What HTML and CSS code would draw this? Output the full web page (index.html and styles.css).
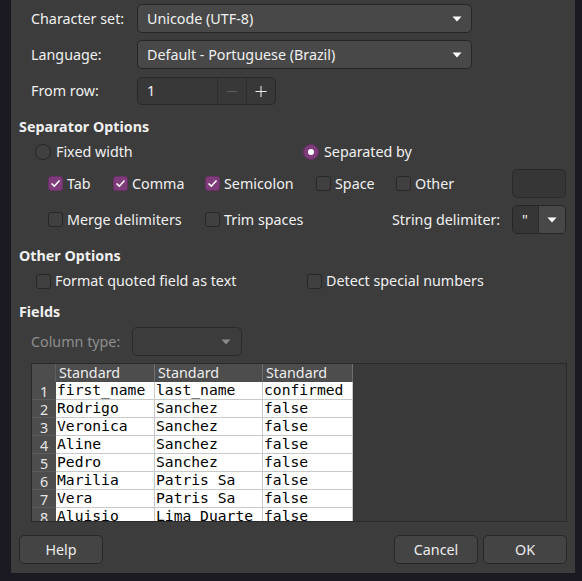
FILE: index.html
```html
<!DOCTYPE html>
<html>
<head>
<meta charset="utf-8">
<link rel="stylesheet" href="styles.css">
</head>
<body>
<div class="desk">
  <div class="dialog">
    <div class="form">
      <span class="lbl">Character set:</span>
      <div class="combo wide"><span>Unicode (UTF-8)</span><svg class="arrow" width="10" height="6" viewBox="0 0 10 6"><path d="M0.5 0.5 L9.5 0.5 L5 5.5 Z"/></svg></div>
      <span class="lbl">Language:</span>
      <div class="combo wide"><span>Default - Portuguese (Brazil)</span><svg class="arrow" width="10" height="6" viewBox="0 0 10 6"><path d="M0.5 0.5 L9.5 0.5 L5 5.5 Z"/></svg></div>
      <span class="lbl">From row:</span>
      <div class="spin">
        <span class="spin-val">1</span>
        <span class="spin-btn"><svg width="12" height="12" viewBox="0 0 12 12"><path class="minus" d="M1 6.5 H11"/></svg></span>
        <span class="spin-btn"><svg width="12" height="12" viewBox="0 0 12 12"><path class="plus" d="M0.5 6.5 H11.5 M6 1 V12"/></svg></span>
      </div>
    </div>

    <div class="heading h-sep">Separator Options</div>
    <div class="radio-row">
      <label class="opt"><span class="radio"></span>Fixed width</label>
      <label class="opt"><span class="radio on"></span>Separated by</label>
    </div>
    <div class="row-a">
      <label class="opt"><span class="chk on"><svg width="15" height="15" viewBox="0 0 15 15"><path d="M3.5 7.5 L6.3 10.2 L11.5 4.5"/></svg></span>Tab</label>
      <label class="opt"><span class="chk on"><svg width="15" height="15" viewBox="0 0 15 15"><path d="M3.5 7.5 L6.3 10.2 L11.5 4.5"/></svg></span>Comma</label>
      <label class="opt"><span class="chk on"><svg width="15" height="15" viewBox="0 0 15 15"><path d="M3.5 7.5 L6.3 10.2 L11.5 4.5"/></svg></span>Semicolon</label>
      <label class="opt"><span class="chk"></span>Space</label>
      <label class="opt"><span class="chk"></span>Other</label>
      <div class="entry other-field"></div>
    </div>
    <div class="row-b">
      <label class="opt"><span class="chk"></span>Merge delimiters</label>
      <label class="opt"><span class="chk"></span>Trim spaces</label>
      <span class="lbl">String delimiter:</span>
      <div class="delim">
        <span class="delim-val">"</span>
        <span class="delim-btn"><svg class="arrow" width="10" height="6" viewBox="0 0 10 6"><path d="M0.5 0.5 L9.5 0.5 L5 5.5 Z"/></svg></span>
      </div>
    </div>

    <div class="heading h-other">Other Options</div>
    <div class="other-row">
      <label class="opt"><span class="chk"></span>Format quoted field as text</label>
      <label class="opt"><span class="chk"></span>Detect special numbers</label>
    </div>

    <div class="heading h-fields">Fields</div>
    <div class="coltype-row">
      <span class="lbl dim">Column type:</span>
      <div class="combo disabled"><svg class="arrow" width="10" height="6" viewBox="0 0 10 6"><path d="M0.5 0.5 L9.5 0.5 L5 5.5 Z"/></svg></div>
    </div>

    <div class="preview">
      <div class="grid">
        <div class="hd corner"></div>
        <div class="hd">Standard</div>
        <div class="hd">Standard</div>
        <div class="hd">Standard</div>

        <div class="rn">1</div><div class="cell">first_name</div><div class="cell">last_name</div><div class="cell">confirmed</div>
        <div class="rn">2</div><div class="cell">Rodrigo</div><div class="cell">Sanchez</div><div class="cell">false</div>
        <div class="rn">3</div><div class="cell">Veronica</div><div class="cell">Sanchez</div><div class="cell">false</div>
        <div class="rn">4</div><div class="cell">Aline</div><div class="cell">Sanchez</div><div class="cell">false</div>
        <div class="rn">5</div><div class="cell">Pedro</div><div class="cell">Sanchez</div><div class="cell">false</div>
        <div class="rn">6</div><div class="cell">Marilia</div><div class="cell">Patris Sa</div><div class="cell">false</div>
        <div class="rn">7</div><div class="cell">Vera</div><div class="cell">Patris Sa</div><div class="cell">false</div>
        <div class="rn">8</div><div class="cell">Aluisio</div><div class="cell">Lima Duarte</div><div class="cell">false</div>
      </div>
    </div>

    <div class="buttons">
      <button class="btn">Help</button>
      <div class="btn-group">
        <button class="btn">Cancel</button>
        <button class="btn">OK</button>
      </div>
    </div>
  </div>
</div>
</body>
</html>
```
FILE: styles.css
```css
* { box-sizing: border-box; }
html, body { margin: 0; padding: 0; }
body {
  width: 582px;
  height: 581px;
  overflow: hidden;
  background: #1b1a22;
  font-family: "Noto Sans", sans-serif;
  font-size: 14.3px;
  line-height: 20px;
  color: #f0f0f0;
}
.desk { width: 582px; height: 581px; padding-left: 11px; }
.dialog {
  width: 564px;
  height: 573px;
  background: #3c3c3c;
  overflow: hidden;
}

/* top form */
.form {
  display: grid;
  grid-template-columns: 106px 335px;
  grid-template-rows: 29px 29px 29px;
  row-gap: 7px;
  padding: 4px 0 0 20px;
  align-items: center;
}
.lbl { white-space: nowrap; }
.lbl.dim { color: #8e8e8e; }

.combo {
  height: 29px;
  border: 1px solid #262626;
  border-radius: 5px;
  background: #484848;
  display: flex;
  align-items: center;
  justify-content: space-between;
  padding: 0 9px 0 9px;
  white-space: nowrap;
}
.combo.wide { width: 335px; }
.arrow path { fill: #ffffff; }
.combo.disabled {
  width: 110px;
  background: #3c3c3c;
  border-color: #2a2a2a;
  justify-content: flex-end;
  padding-right: 10px;
}
.combo.disabled .arrow path { fill: #8a8a8a; }

.spin {
  align-self: end;
  width: 139px;
  height: 28px;
  border: 1px solid #292929;
  border-radius: 5px;
  background: #383838;
  display: flex;
  overflow: hidden;
}
.spin-val {
  width: 80px;
  padding-left: 9px;
  display: flex;
  align-items: center;
}
.spin-btn {
  width: 29px;
  border-left: 1px solid #2e2e2e;
  display: flex;
  align-items: center;
  justify-content: center;
}
.spin-btn path { stroke-width: 1; fill: none; }
.spin-btn .minus { stroke: #5e5e5e; }
.spin-btn .plus { stroke: #f2f2f2; }

/* headings */
.heading {
  font-weight: 700;
  height: 20px;
  padding-left: 8px;
  white-space: nowrap;
}
.h-sep { margin-top: 12px; }
.h-other { margin-top: 12px; }
.h-fields { margin-top: 11px; }

/* option items */
.opt {
  display: flex;
  align-items: center;
  white-space: nowrap;
}
.chk {
  width: 15px;
  height: 15px;
  flex: none;
  border: 1px solid #272727;
  border-radius: 3px;
  background: #404040;
  margin-right: 4px;
  display: flex;
}
.chk.on {
  background: #7e3c7a;
  border-color: #6a2f66;
}
.chk svg { margin: -1px; }
.chk path { fill: none; stroke: #ffffff; stroke-width: 1.6; }
.radio {
  width: 16px;
  height: 16px;
  flex: none;
  border: 1px solid #272727;
  border-radius: 50%;
  background: #404040;
  margin-right: 5px;
  display: flex;
  align-items: center;
  justify-content: center;
}
.radio.on {
  background: #7e3c7a;
  border-color: #6a2f66;
}
.radio.on::after {
  content: "";
  width: 6px;
  height: 6px;
  border-radius: 50%;
  background: #ffffff;
}

.radio-row {
  margin-top: 5px;
  height: 20px;
  display: grid;
  grid-template-columns: 268px auto;
  padding-left: 24px;
  align-items: center;
}
.row-a {
  margin-top: 7px;
  height: 29px;
  display: grid;
  grid-template-columns: 65px 92px 111px 80px 116px 54px;
  padding-left: 37px;
  align-items: center;
}
.row-b {
  margin-top: 7px;
  height: 29px;
  display: grid;
  grid-template-columns: 157px 187px 120px 54px;
  padding-left: 37px;
  align-items: center;
}
.entry {
  height: 29px;
  border: 1px solid #2a2a2a;
  border-radius: 5px;
  background: #363636;
}
.other-field { width: 54px; }
.delim {
  width: 54px;
  height: 29px;
  border: 1px solid #262626;
  border-radius: 5px;
  display: flex;
  overflow: hidden;
}
.delim-val {
  width: 25px;
  background: #363636;
  padding-left: 9px;
  display: flex;
  align-items: center;
}
.delim-btn {
  flex: 1;
  background: #484848;
  border-left: 1px solid #2c2c2c;
  display: flex;
  align-items: center;
  justify-content: center;
}
.other-row {
  margin-top: 5px;
  height: 20px;
  display: grid;
  grid-template-columns: 271px auto;
  padding-left: 25px;
  align-items: center;
}
.coltype-row {
  margin-top: 5px;
  height: 29px;
  display: grid;
  grid-template-columns: 101px 110px;
  padding-left: 20px;
  align-items: center;
}

/* preview table */
.preview {
  margin: 7px 0 0 20px;
  width: 536px;
  height: 159px;
  border: 1px solid #2a2a2a;
  background: #3a3a3a;
  overflow: hidden;
}
.grid {
  display: grid;
  grid-template-columns: 24px 99px 108px 90px;
  grid-auto-rows: 18px;
  width: 321px;
}
.hd {
  background: #4d4d4d;
  border-right: 1px solid #6e6e6e;
  color: #ececec;
  padding-left: 3px;
  line-height: 18px;
  white-space: nowrap;
  overflow: hidden;
}
.hd.corner { border-right-color: #5e5e5e; }
.rn {
  background: #4d4d4d;
  border-bottom: 1px solid #5b5b5b;
  color: #e6e6e6;
  text-align: center;
  line-height: 19px;
}
.cell {
  background: #ffffff;
  border-right: 1px solid #c9c9c9;
  border-bottom: 1px solid #c9c9c9;
  color: #000000;
  font-family: "DejaVu Sans Mono", monospace;
  font-size: 14.67px;
  line-height: 15px;
  padding-left: 1px;
  white-space: nowrap;
  overflow: hidden;
}

/* buttons */
.buttons {
  margin-top: 13px;
  padding: 0 8px;
  display: flex;
  justify-content: space-between;
}
.btn-group { display: flex; gap: 5px; }
.btn {
  width: 84px;
  height: 29px;
  border: 1px solid #272727;
  border-radius: 5px;
  background: #444444;
  color: #ececec;
  font-family: "Noto Sans", sans-serif;
  font-size: 14.3px;
  line-height: 20px;
  padding: 0;
}
```
